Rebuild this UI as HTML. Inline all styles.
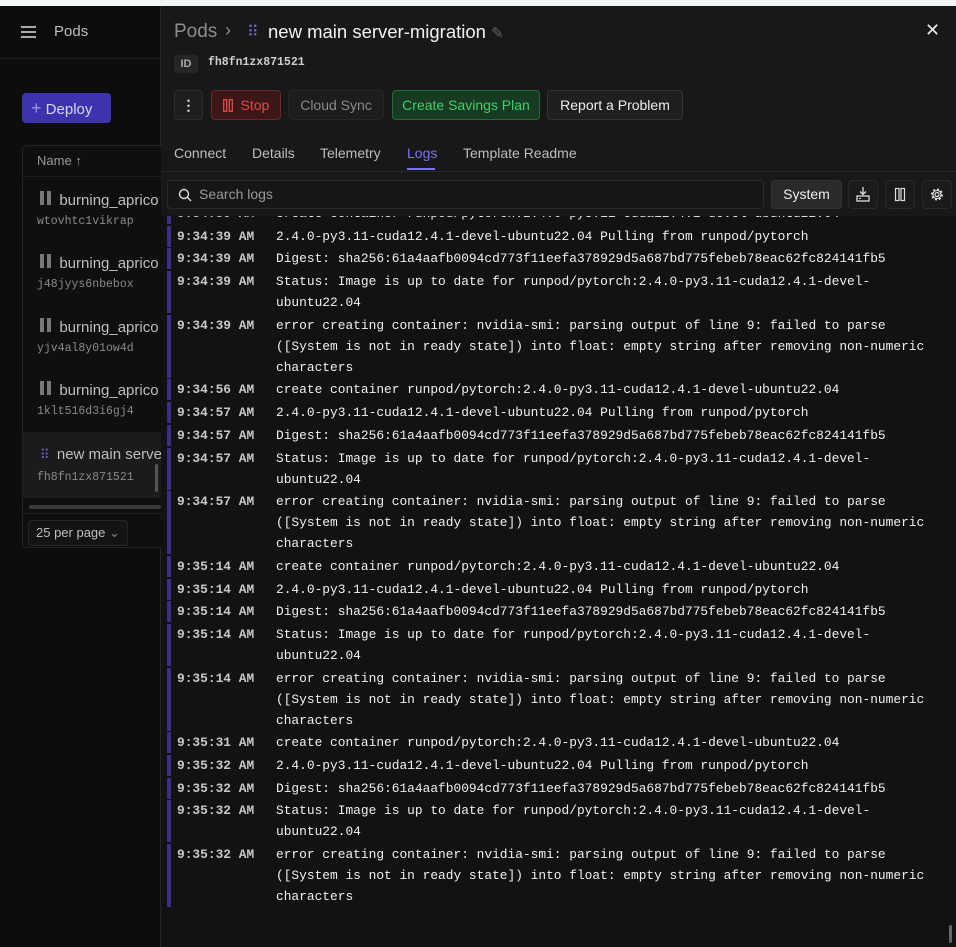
<!DOCTYPE html>
<html><head><meta charset="utf-8"><style>
*{box-sizing:border-box;margin:0;padding:0}
body{width:956px;height:947px;overflow:hidden;background:#0b0b0b;font-family:"Liberation Sans",sans-serif;position:relative}
.abs{position:absolute}
.top{left:0;top:0;width:956px;height:6px;background:#f3f8f5}
.side{left:0;top:6px;width:161px;height:941px;background:#0d0d0d;border-right:1px solid #262626}
.main{left:161px;top:6px;width:795px;height:941px;background:#181818}
.mono{font-family:"Liberation Mono",monospace}
.tbl{left:22px;top:145px;width:150px;height:403px;border:1px solid #222;border-radius:4px;background:#0f0f0f}
.pr{color:#bfbfbf;font-size:15px;white-space:nowrap}
.pid{color:#8a8a8a;font-size:11.5px}
.pause{display:inline-block;width:11px;height:14px;border-left:4px solid #777;border-right:4px solid #777}
.btn{position:absolute;top:90px;height:30px;border-radius:4px;font-size:14px;line-height:28px;text-align:center}
.tab{position:absolute;top:145px;font-size:14px;color:#bdbdbd}
.ib{position:absolute;top:180px;width:30px;height:29px;border:1px solid #2a2a2a;border-radius:4px;background:#1b1b1b}
.logs{left:161px;top:216px;width:795px;height:731px;background:#121212;overflow:hidden}
.inner{position:absolute;left:6px;top:-13px;width:785px}
.row{display:flex;border-left:4px solid #3a2f86;margin-bottom:1.7px;font-family:"Liberation Mono",monospace;font-size:12.87px;line-height:21px;color:#f0f0f0}
.ts{width:105px;padding-left:6px;color:#c8c8c8;flex:none;white-space:nowrap;font-weight:bold}
.msg{width:670px}
</style></head><body>
<div class="abs top"></div>
<div class="abs side">
  <div class="abs" style="left:21px;top:20px;width:15px;height:12px;border-top:2px solid #aaa;border-bottom:2px solid #aaa"><div style="margin-top:3px;height:2px;background:#aaa"></div></div>
  <div class="abs" style="left:54px;top:17px;color:#bdbdbd;font-size:15px">Pods</div>
  <div class="abs" style="left:0;top:52px;width:160px;height:1px;background:#1f1f1f"></div>
  <div class="abs" style="left:22px;top:87px;width:89px;height:30px;background:#3d33ae;border-radius:4px;color:#d8d6f5;font-size:15px;line-height:30px;padding-left:9px"><span style="color:#9d96e0;font-size:18px">+</span> Deploy</div>
</div>
<div class="abs tbl">
  <div class="abs" style="left:14px;top:7px;color:#9a9a9a;font-size:13px">Name ↑</div>
  <div class="abs" style="left:0;top:30px;width:150px;height:1px;background:#1f1f1f"></div>
  <div class="abs pr" style="left:17px;top:45px"><span class="pause"></span>&nbsp; burning_aprico</div>
  <div class="abs pid mono" style="left:14px;top:69px">wtovhtc1vikrap</div>
  <div class="abs pr" style="left:17px;top:108px"><span class="pause"></span>&nbsp; burning_aprico</div>
  <div class="abs pid mono" style="left:14px;top:132px">j48jyys6nbebox</div>
  <div class="abs pr" style="left:17px;top:172px"><span class="pause"></span>&nbsp; burning_aprico</div>
  <div class="abs pid mono" style="left:14px;top:196px">yjv4al8y01ow4d</div>
  <div class="abs pr" style="left:17px;top:235px"><span class="pause"></span>&nbsp; burning_aprico</div>
  <div class="abs pid mono" style="left:14px;top:259px">1klt516d3i6gj4</div>
  <div class="abs" style="left:0;top:286px;width:138px;height:66px;background:#1b1b1d"></div>
  <div class="abs pr" style="left:17px;top:300px"><span style="color:#6a5fd0;font-size:13px;letter-spacing:-1px">⠿</span>&nbsp; new main serve</div>
  <div class="abs pid mono" style="left:14px;top:325px">fh8fn1zx871521</div>
  <div class="abs" style="left:132px;top:318px;width:3px;height:28px;background:#555;border-radius:2px"></div>
  <div class="abs" style="left:6px;top:359px;width:132px;height:4px;background:#3a3a3a;border-radius:2px"></div>
  <div class="abs" style="left:0;top:367px;width:150px;height:1px;background:#1f1f1f"></div>
  <div class="abs" style="left:5px;top:374px;width:100px;height:26px;border:1px solid #262626;border-radius:4px;background:#141414;color:#bdbdbd;font-size:13px;line-height:24px;padding-left:7px">25 per page <span style="color:#888">⌄</span></div>
</div>
<div class="abs main">
  <div class="abs" style="left:13px;top:15px;color:#8d8d8d;font-size:19px">Pods</div>
  <div class="abs" style="left:64px;top:14px;color:#8d8d8d;font-size:18px">›</div>
  <div class="abs" style="left:86px;top:16px;color:#6a5fd0;font-size:16px;letter-spacing:-1px">⠿</div>
  <div class="abs" style="left:107px;top:15px;color:#f2f2f2;font-size:18.5px">new main server-migration <span style="color:#666;font-size:15px">✎</span></div>
  <div class="abs" style="left:764px;top:14px;color:#e8e8e8;font-size:18px">✕</div>
  <div class="abs" style="left:13px;top:49px;width:24px;height:18px;background:#262626;border-radius:3px;color:#aaa;font-size:11px;font-weight:bold;line-height:18px;text-align:center">ID</div>
  <div class="abs mono" style="left:47px;top:50px;color:#cfcfcf;font-size:11.5px;font-weight:bold">fh8fn1zx871521</div>
</div>
<div class="btn" style="left:174px;width:29px;background:#1e1e1e;border:1px solid #2c2c2c;color:#eee;font-weight:bold">⋮</div>
<div class="btn" style="left:211px;width:70px;background:#3b1717;border:1px solid #6e2626;color:#e5484d"><svg width="10" height="13" viewBox="0 0 10 13" style="vertical-align:-2px"><rect x="0.7" y="0.7" width="3" height="11.6" fill="none" stroke="#e5484d" stroke-width="1.3"/><rect x="6.3" y="0.7" width="3" height="11.6" fill="none" stroke="#e5484d" stroke-width="1.3"/></svg>&nbsp; Stop</div>
<div class="btn" style="left:288px;width:96px;background:#1d1d1d;border:1px solid #262626;color:#8a8a8a">Cloud Sync</div>
<div class="btn" style="left:392px;width:148px;background:#163a22;border:1px solid #236b37;color:#3fd16a">Create Savings Plan</div>
<div class="btn" style="left:547px;width:136px;background:#1f1f1f;border:1px solid #333;color:#eee">Report a Problem</div>
<div class="tab" style="left:174px">Connect</div>
<div class="tab" style="left:252px">Details</div>
<div class="tab" style="left:320px">Telemetry</div>
<div class="tab" style="left:407px;color:#7b72f0">Logs</div>
<div class="abs" style="left:407px;top:168px;width:28px;height:2px;background:#7b72f0"></div>
<div class="tab" style="left:463px">Template Readme</div>
<div class="abs" style="left:161px;top:171px;width:795px;height:1px;background:#262626"></div>
<div class="abs" style="left:167px;top:180px;width:597px;height:29px;border:1px solid #2a2a2a;border-radius:4px;background:#161616;color:#9a9a9a;font-size:14px;line-height:27px;padding-left:31px">Search logs
  <svg class="abs" style="left:10px;top:7px" width="14" height="14" viewBox="0 0 14 14"><circle cx="6" cy="6" r="4.5" fill="none" stroke="#ddd" stroke-width="1.4"/><path d="M9.3 9.3L13 13" stroke="#ddd" stroke-width="1.4"/></svg></div>
<div class="abs" style="left:771px;top:180px;width:71px;height:29px;border-radius:4px;background:#2a2a2a;border:1px solid #333;color:#eee;font-size:14px;line-height:27px;text-align:center">System</div>
<div class="ib" style="left:848px"><svg width="28" height="27" viewBox="0 0 28 27"><path d="M14 6v7M11 10.5l3 3 3-3" fill="none" stroke="#ddd" stroke-width="1.3"/><rect x="8" y="15" width="12" height="5" fill="none" stroke="#ddd" stroke-width="1.3"/><path d="M10 17.5h2" stroke="#ddd"/></svg></div>
<div class="ib" style="left:885px"><svg width="28" height="27" viewBox="0 0 28 27"><rect x="9.5" y="7.5" width="3.5" height="12" fill="none" stroke="#ddd" stroke-width="1.2"/><rect x="15" y="7.5" width="3.5" height="12" fill="none" stroke="#ddd" stroke-width="1.2"/></svg></div>
<div class="ib" style="left:922px"><svg width="28" height="27" viewBox="0 0 28 27"><circle cx="14" cy="13.5" r="2" fill="none" stroke="#ddd" stroke-width="1.2"/><circle cx="14" cy="13.5" r="5" fill="none" stroke="#ddd" stroke-width="2" stroke-dasharray="2 1.9"/><circle cx="14" cy="13.5" r="4" fill="none" stroke="#ddd" stroke-width="1.1"/></svg></div>
<div class="abs logs">
<div class="inner">
<div class="row"><div class="ts">9:34:39 AM</div><div class="msg">create container runpod/pytorch:2.4.0-py3.11-cuda12.4.1-devel-ubuntu22.04</div></div>
<div class="row"><div class="ts">9:34:39 AM</div><div class="msg">2.4.0-py3.11-cuda12.4.1-devel-ubuntu22.04 Pulling from runpod/pytorch</div></div>
<div class="row"><div class="ts">9:34:39 AM</div><div class="msg">Digest: sha256:61a4aafb0094cd773f11eefa378929d5a687bd775febeb78eac62fc824141fb5</div></div>
<div class="row"><div class="ts">9:34:39 AM</div><div class="msg">Status: Image is up to date for runpod/pytorch:2.4.0-py3.11-cuda12.4.1-devel-<br>ubuntu22.04</div></div>
<div class="row"><div class="ts">9:34:39 AM</div><div class="msg">error creating container: nvidia-smi: parsing output of line 9: failed to parse<br>([System is not in ready state]) into float: empty string after removing non-numeric<br>characters</div></div>
<div class="row"><div class="ts">9:34:56 AM</div><div class="msg">create container runpod/pytorch:2.4.0-py3.11-cuda12.4.1-devel-ubuntu22.04</div></div>
<div class="row"><div class="ts">9:34:57 AM</div><div class="msg">2.4.0-py3.11-cuda12.4.1-devel-ubuntu22.04 Pulling from runpod/pytorch</div></div>
<div class="row"><div class="ts">9:34:57 AM</div><div class="msg">Digest: sha256:61a4aafb0094cd773f11eefa378929d5a687bd775febeb78eac62fc824141fb5</div></div>
<div class="row"><div class="ts">9:34:57 AM</div><div class="msg">Status: Image is up to date for runpod/pytorch:2.4.0-py3.11-cuda12.4.1-devel-<br>ubuntu22.04</div></div>
<div class="row"><div class="ts">9:34:57 AM</div><div class="msg">error creating container: nvidia-smi: parsing output of line 9: failed to parse<br>([System is not in ready state]) into float: empty string after removing non-numeric<br>characters</div></div>
<div class="row"><div class="ts">9:35:14 AM</div><div class="msg">create container runpod/pytorch:2.4.0-py3.11-cuda12.4.1-devel-ubuntu22.04</div></div>
<div class="row"><div class="ts">9:35:14 AM</div><div class="msg">2.4.0-py3.11-cuda12.4.1-devel-ubuntu22.04 Pulling from runpod/pytorch</div></div>
<div class="row"><div class="ts">9:35:14 AM</div><div class="msg">Digest: sha256:61a4aafb0094cd773f11eefa378929d5a687bd775febeb78eac62fc824141fb5</div></div>
<div class="row"><div class="ts">9:35:14 AM</div><div class="msg">Status: Image is up to date for runpod/pytorch:2.4.0-py3.11-cuda12.4.1-devel-<br>ubuntu22.04</div></div>
<div class="row"><div class="ts">9:35:14 AM</div><div class="msg">error creating container: nvidia-smi: parsing output of line 9: failed to parse<br>([System is not in ready state]) into float: empty string after removing non-numeric<br>characters</div></div>
<div class="row"><div class="ts">9:35:31 AM</div><div class="msg">create container runpod/pytorch:2.4.0-py3.11-cuda12.4.1-devel-ubuntu22.04</div></div>
<div class="row"><div class="ts">9:35:32 AM</div><div class="msg">2.4.0-py3.11-cuda12.4.1-devel-ubuntu22.04 Pulling from runpod/pytorch</div></div>
<div class="row"><div class="ts">9:35:32 AM</div><div class="msg">Digest: sha256:61a4aafb0094cd773f11eefa378929d5a687bd775febeb78eac62fc824141fb5</div></div>
<div class="row"><div class="ts">9:35:32 AM</div><div class="msg">Status: Image is up to date for runpod/pytorch:2.4.0-py3.11-cuda12.4.1-devel-<br>ubuntu22.04</div></div>
<div class="row"><div class="ts">9:35:32 AM</div><div class="msg">error creating container: nvidia-smi: parsing output of line 9: failed to parse<br>([System is not in ready state]) into float: empty string after removing non-numeric<br>characters</div></div>
</div>
<div class="abs" style="left:788px;top:709px;width:3px;height:18px;background:#666;border-radius:2px"></div>
</div>
</body></html>
